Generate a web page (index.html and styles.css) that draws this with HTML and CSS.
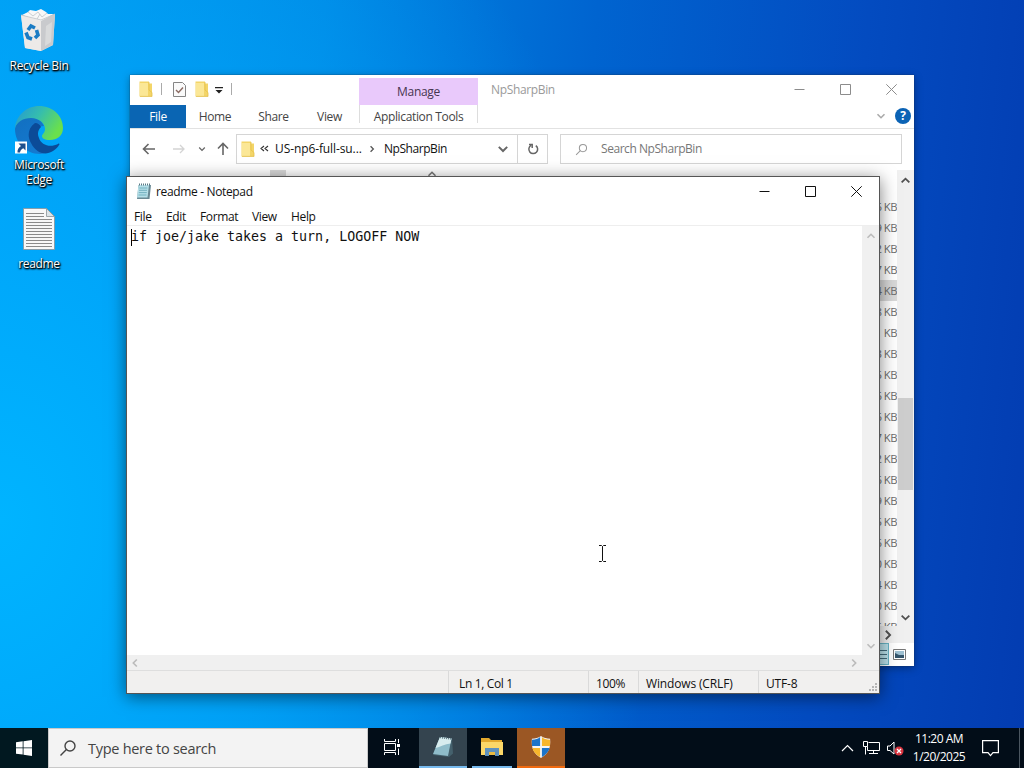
FILE: index.html
```html
<!DOCTYPE html>
<html lang="en">
<head>
  <meta charset="UTF-8">
  <title>Desktop</title>
  <link rel="stylesheet" href="styles.css">
</head>
<body>
  <svg class="defs" width="0" height="0">
    <symbol id="folder" viewBox="0 0 14 16">
      <path fill="#f3d568" d="M0.5 0.5h9.5v2h3v13H0.5z"/>
      <path fill="#fbe796" d="M1 2h8v13H1z"/>
      <path fill="none" stroke="#e5c04c" stroke-width=".8" d="M10 1v8l3 2.5v4M1 15.4h12"/>
    </symbol>
    <symbol id="chevron" viewBox="0 0 10 10">
      <path fill="none" stroke="currentColor" stroke-width="1.6" d="M1.5 3.2L5 6.7l3.500-3.500"/>
    </symbol>
    <symbol id="min" viewBox="0 0 11 11"><path stroke="currentColor" d="M0.500 5.500h10"/></symbol>
    <symbol id="max" viewBox="0 0 11 11"><path fill="none" stroke="currentColor" d="M.5.5h10v10H.5z"/></symbol>
    <symbol id="close" viewBox="0 0 11 11"><path fill="none" stroke="currentColor" d="M.3.3l10.400 10.400M10.700.3L.3 10.700"/></symbol>
    <symbol id="search" viewBox="0 0 18 18">
      <circle cx="11" cy="7" r="5" fill="none" stroke="currentColor" stroke-width="1.400"/>
      <path stroke="currentColor" stroke-width="1.400" d="M7.400 10.600L1.500 16.500"/>
    </symbol>
  </svg>

  <div class="desktop">
    <div class="icons">
      <div class="shortcut bin">
        <svg width="40" height="46" viewBox="0 0 40 46">
          <path fill="#e4e2e0" d="M2 7l20 5 14-6-2 31-12 6-16-3z"/>
          <path fill="#edeae8" d="M2 7l20 5v31l-16-3z"/>
          <path fill="#c9cacd" d="M22 12l14-6-2 31-12 6z"/>
          <path fill="#d9dadb" d="M27 18l6-4-1 20-6 4z"/>
          <path fill="#f7f7f7" d="M3 7l6-3 2-2 6 1 5-2 5 3 2 2 6 0-13 7z"/>
          <path fill="none" stroke="#bfc3c6" stroke-width=".8" d="M2 7l20 5 14-6M9 4l5 4 5-4 4 5 5-4M18 11l3-5"/>
          <g fill="none" stroke="#1c7cc4" stroke-width="3.600">
            <path d="M9 22l3-4 4 2"/>
            <path d="M17.500 22l1.500 5-3 3"/>
            <path d="M13 31l-4-1.500-2-5"/>
          </g>
        </svg>
        <span>Recycle Bin</span>
      </div>
      <div class="shortcut edge">
        <svg width="50" height="50" viewBox="0 0 50 50">
          <defs>
            <linearGradient id="rim" x1="0" y1="0" x2="1" y2=".5">
              <stop offset="0" stop-color="#2496d4"/><stop offset=".5" stop-color="#35bdae"/><stop offset="1" stop-color="#6ae04c"/>
            </linearGradient>
            <linearGradient id="wave" x1="0" y1="0" x2=".6" y2="1">
              <stop offset="0" stop-color="#126fc0"/><stop offset="1" stop-color="#1479cf"/>
            </linearGradient>
          </defs>
          <path fill="url(#wave)" d="M1 24c0 14 11 25 25 25 3 0 4-1 4-1L20 34l2-12 8-1c-2-5-7-9-15-9C7 12 2 17 1 24z"/>
          <path fill="#0b4b98" d="M21 18c-7 5-8 13-4 20 5 10 14 13 22 8 3-2 5-4 6-6 1-1 0-2-1-1-8 4-17 1-19-6-2-4-1-8 2-11-1-2-3-4-6-4z"/>
          <path fill="url(#rim)" d="M1 23C2 10 13 1 25 1c14 0 24 10 24 22 0 8-6 12-13 12-6 0-8-2-8-4s3-3 3-7c0-6-6-11-14-11C9 13 3 17 1 23z"/>
          <path fill="#fff" d="M1 36.500h12v12H1z"/>
          <path fill="#1e4f8c" d="M4.500 38.500h7v7l-2.200-2.200c-2 1-2.800 2-3.300 4.200H3.500c-.2-3 1-5 3.500-6.500z"/>
        </svg>
        <span>Microsoft Edge</span>
      </div>
      <div class="shortcut text-file">
        <svg width="32" height="42" viewBox="0 0 32 42">
          <path fill="#f8f8f8" stroke="#8a9297" stroke-width=".8" d="M.5.5h23l8 8v33H.500z"/>
          <path fill="#dce4e8" stroke="#8a9297" stroke-width=".8" d="M23.500.5v8h8z"/>
          <path stroke="#8b8b8b" d="M3 5.500h18M3 8.500h18M3 11.500h26M3 14.500h26M3 17.500h26M3 20.500h26M3 23.500h26M3 26.500h26M3 29.500h26M3 32.500h26M3 35.500h26M3 38.500h26"/>
        </svg>
        <span>readme</span>
      </div>
    </div>

    <!-- file explorer -->
    <div class="window explorer">
      <div class="ribbon">
        <div class="quick">
          <svg width="14" height="16"><use href="#folder"/></svg>
          <i class="sep"></i>
          <svg class="props" width="13" height="15" viewBox="0 0 13 15">
            <path fill="#fafafa" stroke="#858585" d="M.5.5h9l3 3v11H.5z"/>
            <path fill="none" stroke="#8a6a62" stroke-width="1.400" d="M3 8l2.500 2.500L10 5.500"/>
          </svg>
          <svg width="14" height="16"><use href="#folder"/></svg>
          <svg class="drop" width="8" height="8" viewBox="0 0 8 8"><path fill="#222" d="M0 0h8v1.200H0zM.5 3h7L4 6.500z"/></svg>
          <i class="sep"></i>
        </div>
        <div class="manage">Manage</div>
        <div class="caption">NpSharpBin</div>
        <div class="buttons">
          <svg width="11" height="11"><use href="#min"/></svg>
          <svg width="11" height="11"><use href="#max"/></svg>
          <svg width="11" height="11"><use href="#close"/></svg>
        </div>
      </div>
      <div class="tabs">
        <div class="tab file">File</div>
        <div class="tab home">Home</div>
        <div class="tab share">Share</div>
        <div class="tab view">View</div>
        <div class="tab tools">Application Tools</div>
        <div class="help">
          <svg width="10" height="10"><use href="#chevron"/></svg>
          <b>?</b>
        </div>
      </div>
      <div class="address-row">
        <div class="nav">
          <svg width="14" height="12" viewBox="0 0 14 12"><path fill="none" stroke="#666" stroke-width="1.600" d="M13 6H1.500M6.500 1L1.500 6l5 5"/></svg>
          <svg class="forward" width="12" height="12" viewBox="0 0 12 12"><path fill="none" stroke="#d4d4d4" stroke-width="1.300" d="M0 6h11M7 2l4 4-4 4"/></svg>
          <svg class="recent" width="8" height="8"><use href="#chevron"/></svg>
          <svg width="12" height="14" viewBox="0 0 12 14"><path fill="none" stroke="#666" stroke-width="1.600" d="M6 13V1.500M1 6.500l5-5 5 5"/></svg>
        </div>
        <div class="address">
          <svg width="14" height="16"><use href="#folder"/></svg>
          <svg class="crumbs" width="9" height="8" viewBox="0 0 9 8"><path fill="none" stroke="#333" stroke-width="1.100" d="M4 1L1 3.500 4 6M8 1L5 3.500 8 6"/></svg>
          <span class="parent">US-np6-full-su...</span>
          <svg class="next" width="8" height="8"><use href="#chevron"/></svg>
          <span class="here">NpSharpBin</span>
          <svg class="open" width="12" height="12"><use href="#chevron"/></svg>
          <div class="refresh">
            <svg width="12" height="12" viewBox="0 0 12 12"><path fill="none" stroke="#666" stroke-width="1.500" d="M8.800 2.600A4.400 4.400 0 1 1 4 2.400M2 1.500h3.200v3.500"/></svg>
          </div>
        </div>
        <div class="find">
          <svg width="13" height="13"><use href="#search"/></svg>
          <span>Search NpSharpBin</span>
        </div>
      </div>
      <div class="content">
        <div class="head">
          <i class="grip"></i>
          <svg width="10" height="10"><use href="#chevron"/></svg>
        </div>
        <div class="list">
          <div>6 KB</div>
          <div>9 KB</div>
          <div>2 KB</div>
          <div>7 KB</div>
          <div class="selected">4 KB</div>
          <div>8 KB</div>
          <div>1 KB</div>
          <div>3 KB</div>
          <div>5 KB</div>
          <div>6 KB</div>
          <div>6 KB</div>
          <div>7 KB</div>
          <div>2 KB</div>
          <div>6 KB</div>
          <div>9 KB</div>
          <div>5 KB</div>
          <div>6 KB</div>
          <div>0 KB</div>
          <div>4 KB</div>
          <div>0 KB</div>
          <div>5 KB</div>
        </div>
        <div class="vscroll">
          <svg class="up" width="11" height="11"><use href="#chevron"/></svg>
          <div class="thumb"></div>
          <svg width="11" height="11"><use href="#chevron"/></svg>
        </div>
      </div>
      <div class="hscroll"><svg width="12" height="12"><use href="#chevron"/></svg></div>
      <div class="views">
        <div class="details">
          <svg width="14" height="14" viewBox="0 0 14 14"><path stroke="#426b7b" d="M0 2.500h12M0 6.500h12M0 10.500h12"/></svg>
        </div>
        <svg width="13" height="11" viewBox="0 0 13 11">
          <path fill="#fff" stroke="#777" d="M.5.5h12v10H.5z"/>
          <path fill="#9fc1d2" d="M2 2h9v7H2z"/><path fill="#35556b" d="M2 4l4 2h5v3H2z"/>
        </svg>
      </div>
    </div>

    <!-- notepad -->
    <div class="window notepad">
      <div class="title">
        <svg width="15" height="17" viewBox="0 0 15 17">
          <path fill="#6a8994" d="M2.500 2H15l-1.500 14H1z"/>
          <path fill="#b5dfe8" d="M2.500 2H13l-1.500 12.500H1z"/>
          <path stroke="#63a5b5" stroke-width=".8" d="M3.300 5h8M3 7.300h8M2.800 9.600h8M2.500 12h8"/>
          <path stroke="#5a7a85" stroke-dasharray="1 1" stroke-width="2" d="M3 1.500h11"/>
        </svg>
        <span>readme - Notepad</span>
        <div class="buttons">
          <svg width="11" height="11"><use href="#min"/></svg>
          <svg width="11" height="11"><use href="#max"/></svg>
          <svg width="11" height="11"><use href="#close"/></svg>
        </div>
      </div>
      <div class="menu">
        <span class="m-file">File</span>
        <span class="m-edit">Edit</span>
        <span class="m-format">Format</span>
        <span class="m-view">View</span>
        <span>Help</span>
      </div>
      <div class="editor">
        <div class="text"><i class="caret"></i>if joe/jake takes a turn, LOGOFF NOW</div>
        <div class="bar">
          <svg class="up" width="10" height="10"><use href="#chevron"/></svg>
          <svg width="10" height="10"><use href="#chevron"/></svg>
        </div>
      </div>
      <div class="bottom-bar">
        <svg class="left" width="10" height="10"><use href="#chevron"/></svg>
        <svg class="right" width="10" height="10"><use href="#chevron"/></svg>
      </div>
      <div class="status">
        <div class="position">Ln 1, Col 1</div>
        <div class="zoom">100%</div>
        <div class="eol">Windows (CRLF)</div>
        <div class="encoding">UTF-8</div>
        <svg width="9" height="9" viewBox="0 0 9 9"><path fill="#b5b5b5" d="M6 0h2v2H6zM3 3h2v2H3zM6 3h2v2H6zM0 6h2v2H0zM3 6h2v2H3zM6 6h2v2H6z"/></svg>
      </div>
    </div>

    <svg class="cursor" width="9" height="17" viewBox="0 0 9 17"><path fill="none" stroke="#111" d="M1 .5h2.500l1 1 1-1H8M4.500 1.500v14M1 16.500h2.500l1-1 1 1H8"/></svg>
  </div>

  <div class="taskbar">
    <div class="start">
      <svg width="16" height="16" viewBox="0 0 16 16"><path fill="#fff" d="M0 2.200l6.700-.9v6.200H0zM7.500 1.200L16 0v7.500H7.500zM0 8.300h6.700v6.300L0 13.700zM7.500 8.300H16V16l-8.500-1.200z"/></svg>
    </div>
    <div class="search">
      <svg width="18" height="18"><use href="#search"/></svg>
      <span>Type here to search</span>
    </div>
    <div class="task view-button">
      <svg width="17" height="16" viewBox="0 0 17 16"><path fill="none" stroke="#fff" d="M.5 0v2.500h11V0M.5 16v-2.500h11V16M.5 4.500h11v7H.5zM14.500 0v4M14.500 9.500V16"/><path fill="#fff" d="M13 5h3v3h-3z"/></svg>
    </div>
    <div class="task active">
      <svg width="24" height="24" viewBox="0 0 24 24">
        <path fill="#45616d" d="M9 2l12 1.500 1 15-4 3.500-16-2z"/>
        <path fill="#8fbcc9" d="M9 2l11.500 1.500L17 21 2 19z"/>
        <path fill="#d8ecee" d="M9 2l11.500 1.500-1 5C14 9 9 12 4.500 13z"/>
        <path stroke="#5d7680" stroke-dasharray="1 1" stroke-width="1.500" d="M9 2.500l11.500 1.500"/>
      </svg>
    </div>
    <div class="task open-app">
      <svg width="24" height="20" viewBox="0 0 24 20">
        <path fill="#e3a92d" d="M1 1h8l2 2h11v5H1z"/>
        <path fill="#fbd768" d="M1 5h22v13H1z"/>
        <path fill="#5e91bd" d="M5 11h14v8h-4v-4H9v4H5z"/>
        <path fill="#e9bb43" d="M9 15h6v3H9z"/>
      </svg>
    </div>
    <div class="task alert">
      <svg width="20" height="22" viewBox="0 0 22 24">
        <path fill="#f5f5f5" d="M11 0c3 2 6 3 10 3 1 10-2 17-10 21C3 20 0 13 1 3c4 0 7-1 10-3z"/>
        <path fill="#1c74c9" d="M10 1v10H1.200c-.3-2-.3-5 0-7C5 4 8 3 10 1zM12 13h8.500c-1.200 4-4 7.500-8.500 10z"/>
        <path fill="#f8b62c" d="M12 1v10h8.800c.3-2 .3-5 0-7C17 4 14 3 12 1zM10 13H1.500c1.200 4 4 7.500 8.500 10z"/>
      </svg>
    </div>
    <div class="tray">
      <svg class="more" width="13" height="8" viewBox="0 0 13 8"><path fill="none" stroke="#fff" stroke-width="1.200" d="M1 7l5.500-5.500L12 7"/></svg>
      <svg class="network" width="17" height="14" viewBox="0 0 17 14"><path fill="none" stroke="#fff" d="M5.500 1.500h11v8h-12v-4M.5.500h4v5h-4zM2.500 5.500v8M10.500 9.500v3M6 12.500h9"/></svg>
      <svg class="sound" width="17" height="15" viewBox="0 0 17 15">
        <path fill="none" stroke="#fff" d="M.5 5h2.500L7 1v12L3 9.500H.500z"/>
        <circle cx="12" cy="10" r="4.500" fill="#d9343f"/>
        <path stroke="#fff" stroke-width="1.300" d="M10 8l4 4M14 8l-4 4"/>
      </svg>
      <div class="clock"><span>11:20 AM</span><span>1/20/2025</span></div>
      <svg class="notes" width="17" height="17" viewBox="0 0 17 17"><path fill="none" stroke="#fff" stroke-width="1.200" d="M.6.6h15.800v12H11l-2.500 3-2.500-3H.6z"/></svg>
      <i class="peek"></i>
    </div>
  </div>
</body>
</html>
```
FILE: styles.css
```css
* {
  box-sizing: border-box;
}

body {
  margin: 0;
  width: 1024px;
  height: 768px;
  overflow: hidden;
  display: flex;
  flex-direction: column;
  font-family: "Open Sans", "Noto Sans", sans-serif;
  font-size: 12px;
  letter-spacing: -0.35px;
  color: #111;
}

svg {
  flex: none;
  display: block;
}

.defs {
  position: absolute;
}

.desktop {
  position: relative;
  height: 728px;
  background:
    radial-gradient(ellipse 660px 800px at 0 520px, #00b4ff 0%, rgba(0, 170, 253, 0.8) 35%, rgba(0, 140, 235, 0) 100%),
    linear-gradient(95deg, #009cf0 0%, #0088e4 30%, #0064d0 55%, #034bc0 80%, #033cb1 100%);
}

/* desktop shortcuts */
.icons {
  width: 78px;
  padding-top: 8px;
}

.shortcut {
  display: flex;
  flex-direction: column;
  align-items: center;
  text-align: center;
  line-height: 15px;
  color: #fff;
  text-shadow: 0 1px 2px #000, 1px 1px 2px #000, 1px 1px 1px rgba(0, 0, 0, 0.7);
}

.bin {
  height: 97px;
}

.bin span {
  margin-top: 4px;
}

.edge {
  height: 103px;
}

.edge span {
  width: 60px;
  margin-top: 2px;
}

.text-file span {
  margin-top: 6px;
}

/* windows */
.window {
  position: absolute;
  display: flex;
  flex-direction: column;
  background: #fff;
}

.explorer {
  left: 130px;
  top: 75px;
  width: 784px;
  height: 591px;
  box-shadow: 0 0 1px #234, 0 2px 8px rgba(0, 0, 0, 0.35);
}

.ribbon {
  display: flex;
  height: 30px;
}

.quick {
  display: flex;
  align-items: center;
  width: 229px;
  padding: 0 0 2px 9px;
}

.sep {
  width: 1px;
  height: 12px;
  margin-left: 8px;
  background: #aaa;
}

.props {
  margin: 0 9px 0 11px;
}

.drop {
  margin: 3px 0 0 6px;
}

.manage {
  width: 119px;
  height: 27px;
  margin-top: 3px;
  background: #e9c9fb;
  color: #463650;
  text-align: center;
  line-height: 28px;
  letter-spacing: -0.3px;
}

.caption {
  margin-left: 13px;
  line-height: 30px;
  color: #9a9a9a;
}

.buttons {
  display: flex;
  align-items: center;
  gap: 35px;
  margin-left: auto;
}

.explorer .buttons {
  padding: 0 17px 2px 0;
  color: #8c8c8c;
}

.tabs {
  display: flex;
  height: 24px;
  border-bottom: 1px solid #e2e2e2;
  line-height: 24px;
  color: #444;
}

.tab {
  text-align: center;
}

.file {
  width: 56px;
  height: 23px;
  background: #0a65b3;
  color: #fff;
}

.home {
  width: 58px;
}

.share {
  width: 59px;
}

.view {
  width: 53px;
}

.tools {
  width: 119px;
  height: 18px;
  margin-left: 3px;
  border: solid #ddd;
  border-width: 0 1px;
  letter-spacing: -0.35px;
}

.help {
  display: flex;
  align-items: center;
  gap: 9px;
  margin-left: auto;
  padding: 0 3px 2px 0;
  color: #aaa;
}

.help b {
  width: 16px;
  height: 16px;
  border-radius: 50%;
  background: #0b63b5;
  color: #fff;
  text-align: center;
  line-height: 16px;
}

.address-row {
  display: flex;
  height: 41px;
  padding-top: 5px;
}

.nav {
  display: flex;
  align-items: center;
  width: 106px;
  height: 30px;
  padding-left: 12px;
  color: #666;
}

.forward {
  margin-left: 17px;
}

.recent {
  margin: 0 11px 0 13px;
}

.address {
  display: flex;
  align-items: center;
  width: 312px;
  height: 30px;
  padding-left: 4px;
  border: 1px solid #d5d5d5;
  line-height: 16px;
}

.address span {
  margin-bottom: 1px;
}

.find span {
  margin: 0 0 1px 13px;
}

.crumbs {
  margin-left: 5px;
}

.parent {
  width: 88px;
  margin-left: 6px;
  letter-spacing: -0.1px;
}

.here {
  letter-spacing: -0.45px;
}

.next {
  margin: 0 8px 0 5px;
  transform: rotate(-90deg);
  color: #555;
}

.open {
  margin: 0 8px 0 auto;
  color: #666;
}

.refresh {
  display: flex;
  align-items: center;
  justify-content: center;
  width: 30px;
  height: 28px;
  border-left: 1px solid #d5d5d5;
}

.find {
  display: flex;
  align-items: center;
  width: 342px;
  height: 30px;
  margin-left: 12px;
  padding-left: 14px;
  border: 1px solid #d5d5d5;
  color: #777;
  letter-spacing: -0.45px;
}

.find svg {
  color: #999;
}

.content {
  display: flex;
  height: 456px;
  overflow: hidden;
}

.head {
  display: flex;
  align-items: flex-start;
  width: 700px;
}

.grip {
  width: 16px;
  height: 10px;
  margin-left: 140px;
  background: #d9d9d9;
}

.head svg {
  margin: -1px 0 0 141px;
  transform: rotate(180deg);
  color: #777;
}

.list {
  width: 67px;
  padding-top: 26px;
  line-height: 21px;
  text-align: right;
  font-size: 11.300px;
  letter-spacing: -0.55px;
  color: #6d6d6d;
}

.list div {
  height: 21px;
}

.list .selected {
  background: #d9d9d9;
}

.vscroll {
  display: flex;
  flex-direction: column;
  align-items: center;
  width: 17px;
  padding: 5px 1px 3px 0;
  background: #f0f0f0;
  color: #505050;
}

.up {
  transform: rotate(180deg);
}

.thumb {
  width: 15px;
  height: 92px;
  margin: 212px 0 auto;
  background: #cdcdcd;
}

.hscroll {
  display: flex;
  justify-content: flex-end;
  align-items: center;
  height: 17px;
  padding-right: 20px;
  background: #f0f0f0;
  color: #505050;
}

.hscroll svg {
  transform: rotate(-90deg);
}

.views {
  display: flex;
  justify-content: flex-end;
  align-items: center;
  gap: 4px;
  height: 23px;
  padding: 0 8px 1px 0;
}

.details {
  width: 24px;
  height: 22px;
  padding: 4px 0 0 9px;
  background: #b9e1ea;
  border: 1px solid #68b4c5;
}

.notepad {
  left: 126px;
  top: 176px;
  width: 754px;
  height: 518px;
  border: 1px solid #555;
  box-shadow: 0 3px 16px rgba(0, 0, 0, 0.5);
}

.title {
  display: flex;
  align-items: center;
  height: 29px;
  padding: 0 17px 0 9px;
}

.title span {
  margin-left: 5px;
  letter-spacing: -0.35px;
}

.menu {
  display: flex;
  height: 20px;
  padding-left: 7px;
  line-height: 21px;
  border-bottom: 1px solid #eee;
}

.m-file {
  width: 32px;
}

.m-edit {
  width: 34px;
}

.m-format {
  width: 52px;
}

.m-view {
  width: 39px;
}

.editor {
  display: flex;
  height: 429px;
}

.text {
  flex: 1;
  padding-left: 4px;
  font-family: "DejaVu Sans Mono", monospace;
  font-size: 13.300px;
  letter-spacing: 0;
  line-height: 21px;
  white-space: pre;
}

.caret {
  display: inline-block;
  width: 1px;
  height: 17px;
  margin-right: -1px;
  vertical-align: middle;
  background: #000;
}

.bar {
  display: flex;
  flex-direction: column;
  align-items: center;
  justify-content: space-between;
  flex: none;
  width: 17px;
  padding: 5px 0 4px;
  background: #f0f0f0;
  color: #bbb;
}

.bottom-bar {
  display: flex;
  flex: none;
  align-items: center;
  justify-content: space-between;
  height: 15px;
  padding: 0 20px 0 3px;
  background: #f0f0f0;
  color: #bbb;
}

.left {
  transform: rotate(90deg);
}

.right {
  transform: rotate(-90deg);
}

.editor,
.title,
.menu {
  flex: none;
}

.status {
  display: flex;
  height: 23px;
  padding-left: 321px;
  border-top: 1px solid #dedede;
  background: #f1f0ef;
  line-height: 25px;
}

.status div {
  border-left: 1px solid #dadada;
}

.position {
  width: 140px;
  padding-left: 10px;
}

.zoom {
  width: 50px;
  padding-left: 7px;
}

.eol {
  width: 120px;
  padding-left: 7px;
  letter-spacing: -0.15px;
}

.encoding {
  padding-left: 7px;
  letter-spacing: -0.15px;
}

.status svg {
  margin: auto 1px 1px auto;
}

.cursor {
  position: absolute;
  left: 598px;
  top: 545px;
}

/* taskbar */
.taskbar {
  display: flex;
  height: 40px;
  background: #020d18;
  color: #fff;
}

.start {
  display: flex;
  align-items: center;
  justify-content: center;
  width: 48px;
  background: #011820;
}

.search {
  display: flex;
  align-items: center;
  width: 320px;
  padding-left: 10px;
  background: #f3f3f3;
  border: 1px solid #c9c9c9;
  color: #444;
  font-size: 14.500px;
  letter-spacing: -0.28px;
}

.search span {
  margin-left: 11px;
}

.task {
  display: flex;
  align-items: center;
  justify-content: center;
  width: 48px;
  border-bottom: 2px solid transparent;
}

.view-button {
  width: 51px;
  padding-right: 3px;
}

.active {
  background: #34444f;
  border-color: #76b9ed;
}

.open-app {
  width: 40px;
  margin: 0 5px;
  border-color: #76b9ed;
}

.alert {
  background: #9b5724;
  border-color: #f06a10;
}

.tray {
  display: flex;
  align-items: center;
  margin-left: auto;
}

.network {
  margin: 0 7px 0 9px;
}

.clock {
  display: flex;
  flex-direction: column;
  align-items: center;
  width: 60px;
  margin-left: 5px;
  line-height: 18px;
  letter-spacing: -0.5px;
}

.notes {
  margin-left: 13px;
}

.peek {
  width: 1px;
  height: 40px;
  margin: 0 4px 0 20px;
  background: #4b5660;
}
```
